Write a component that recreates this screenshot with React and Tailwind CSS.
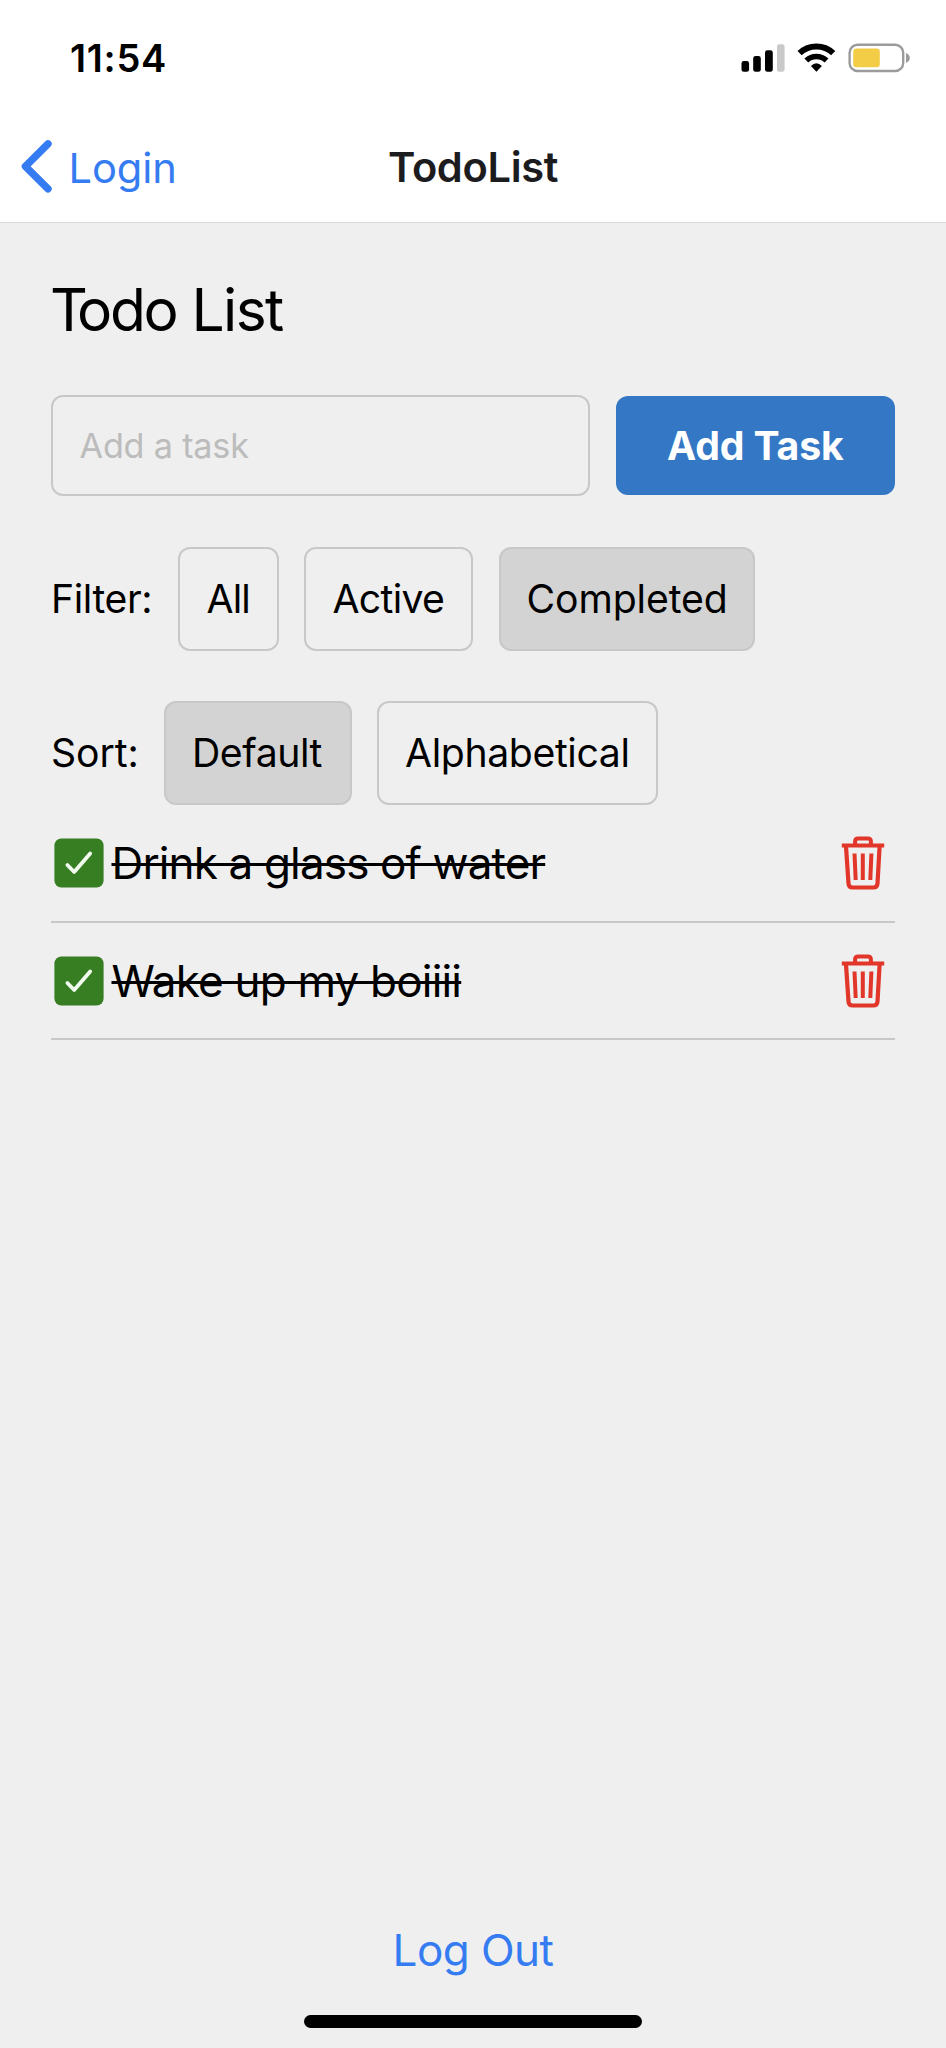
import React from "react";

function StatusBar() {
  return (
    <div className="flex h-[115px] items-center justify-between pl-[70px] pr-[35px]">
      <span className="text-[38px] leading-[48px] font-semibold tracking-[0.71px] text-black">11:54</span>
      <svg className="h-[34px] w-[172px]" viewBox="739 41 172 34">
        <rect x="741.5" y="61" width="7.6" height="10.8" rx="2.4" fill="#000" />
        <rect x="753.2" y="56" width="7.6" height="15.8" rx="2.4" fill="#000" />
        <rect x="765" y="50.3" width="7.8" height="21.5" rx="2.4" fill="#000" />
        <rect x="777" y="44.3" width="7.6" height="27.5" rx="2.4" fill="#c9c9c9" />
        <path d="M799.6 53.1 A 24.5 24.5 0 0 1 833.2 53.1" fill="none" stroke="#000" strokeWidth="6" />
        <path d="M806.3 60.5 A 14.6 14.6 0 0 1 826.5 60.5" fill="none" stroke="#000" strokeWidth="5.6" />
        <path d="M816.4 71.8 L810.9 66 Q816.4 60.6 821.9 66 Z" fill="#000" />
        <rect x="849.6" y="44.8" width="53.6" height="26.2" rx="8" fill="none" stroke="#9b9b9b" strokeWidth="2.4" />
        <rect x="853.2" y="48.6" width="26.6" height="18.6" rx="3.2" fill="#f4cd46" />
        <path d="M906 53 C908.8 54.2 909.8 56 909.8 57.9 C909.8 59.8 908.8 61.6 906 62.8 Z" fill="#9b9b9b" />
      </svg>
    </div>
  );
}

function NavBar() {
  return (
    <div className="grid h-[108px] grid-cols-[388px_1fr] items-center border-b border-[#d9d9d9] pb-[2px]">
      <button className="flex items-center pl-[20px] text-left">
        <svg className="-mt-[3px] h-[56px] w-[34px]" viewBox="20 138 34 56">
          <path
            d="M48 143.8 L25.4 166.3 L48 188.8"
            fill="none"
            stroke="#357bf2"
            strokeWidth="7.4"
            strokeLinecap="round"
            strokeLinejoin="round"
          />
        </svg>
        <span className="pl-[14.5px] text-[41.6px] leading-[50px] tracking-[-0.1px] text-[#357bf2]">Login</span>
      </button>
      <span className="pb-[2px] text-[41.6px] leading-[50px] font-semibold tracking-[-0.33px] text-[#1c1c1e]">TodoList</span>
    </div>
  );
}

function CheckBox() {
  return (
    <svg className="h-[50px] w-[50px]" viewBox="0 0 50 50">
      <rect x="0.4" y="0.4" width="49.2" height="49.2" rx="7" fill="#377e22" />
      <path d="M13.4 27 L20.2 34 L36.2 15.4" fill="none" stroke="#f1fbee" strokeWidth="3.8" strokeLinecap="round" strokeLinejoin="round" />
    </svg>
  );
}

function TrashIcon() {
  return (
    <svg className="h-[54px] w-[44px]" viewBox="841.5 836.5 44 54" fill="none" stroke="#e2362a">
      <path d="M842.3 846.1 H884.7" strokeWidth="4" />
      <path d="M855.6 846 V841.8 Q855.6 838.9 858.7 838.9 H868.3 Q871.4 838.9 871.4 841.8 V846" strokeWidth="4" />
      <path d="M846.5 847 L849 884.1 Q849.3 888 853.2 888 H873.8 Q877.7 888 878 884.1 L880.1 847" strokeWidth="4.2" />
      <path d="M855 854 L856.2 880.5" strokeWidth="4" />
      <path d="M863.3 854 V880.5" strokeWidth="4" />
      <path d="M871.9 854 L870.8 880.5" strokeWidth="4" />
    </svg>
  );
}

function Chip({ label, box, active }) {
  return (
    <button
      className={`flex h-[104px] items-center rounded-[12px] border-2 border-[#c8c8c8] text-left whitespace-nowrap ${active ? "bg-[#d3d3d3]" : ""} ${box}`}
    >
      {label}
    </button>
  );
}

function Task({ label, spacing }) {
  return (
    <li className="flex h-[117.6px] items-center border-b-2 border-[#c8c8c8] pl-[3px] pr-[10px] pt-[1px]">
      <CheckBox />
      <span
        className={`flex-1 pl-[7.5px] text-[44px] leading-[54px] whitespace-nowrap line-through decoration-[2.5px] ${spacing}`}
      >
        {label}
      </span>
      <TrashIcon />
    </li>
  );
}

export default function App() {
  return (
    <div className="flex h-[2048px] w-[946px] flex-col overflow-hidden bg-[#efefef] font-['Inter',sans-serif] text-black">
      <header className="bg-white">
        <StatusBar />
        <NavBar />
      </header>
      <main className="flex flex-1 flex-col px-[51px] pt-[55px]">
        <h1 className="-ml-px text-[58.7px] leading-[64px] tracking-[-1.6px]">
          <span className="tracking-[-11px]">T</span>
          <span className="tracking-[-2.2px]">odo</span> List
        </h1>
        <div className="mt-[53px] flex justify-between">
          <div className="flex h-[101px] w-[539px] items-center rounded-[12px] border-2 border-[#c8c8c8] pl-[26.5px] text-[34.2px] tracking-[-0.2px] text-[#bcbcbc]">
            Add a task
          </div>
          <button className="mt-px flex h-[99px] w-[279px] items-center rounded-[12px] bg-[#3477c5] pt-[2px] pl-[51px] text-[39.2px] font-bold tracking-[-0.15px] whitespace-nowrap text-white">
            Add Task
          </button>
        </div>
        <div className="mt-[51px] flex items-center text-[39.2px]">
          <span className="w-[127px] tracking-[-0.4px]">Filter:</span>
          <Chip label="All" box="mr-[25px] w-[101px] pl-[26.5px] tracking-[-0.9px]" />
          <Chip label="Active" box="mr-[26px] w-[169px] pl-[26.5px] tracking-[-0.7px]" />
          <Chip label="Completed" box="w-[256px] pl-[25.5px] tracking-[-0.1px]" active />
        </div>
        <div className="mt-[50px] flex items-center text-[39.2px]">
          <span className="w-[113px] tracking-[-0.1px]">Sort:</span>
          <Chip label="Default" box="mr-[25px] w-[188px] pl-[26px] tracking-[-0.45px]" active />
          <Chip label="Alphabetical" box="w-[281px] pl-[26px] tracking-[-0.38px]" />
        </div>
        <ul>
          <Task label="Drink a glass of water" spacing="tracking-[-0.85px]" />
          <Task label="Wake up my boiiii" spacing="tracking-[-0.8px]" />
        </ul>
      </main>
      <footer className="flex flex-col items-center pb-[20px]">
        <button className="text-[44px] leading-[54px] tracking-[-0.55px] text-[#357bf2]">Log Out</button>
        <div className="mt-[38px] h-[13px] w-[338px] rounded-full bg-black" />
      </footer>
    </div>
  );
}
